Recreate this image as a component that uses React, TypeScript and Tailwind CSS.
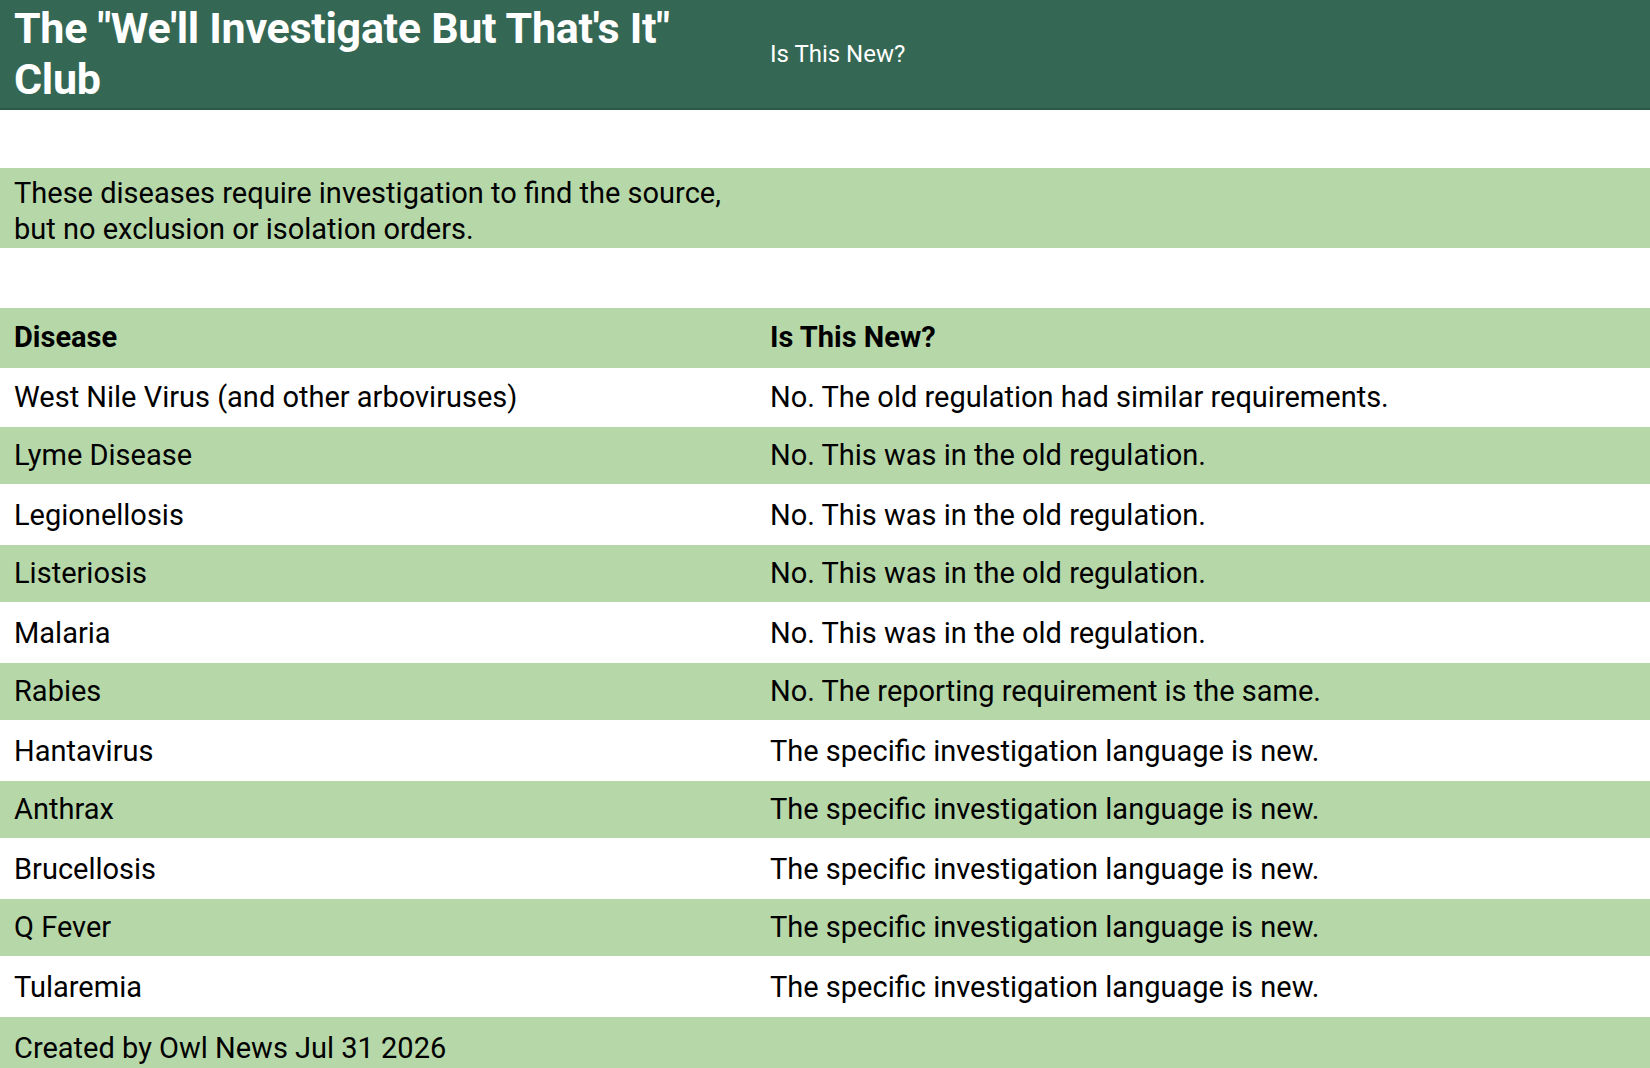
const rows: [string, string][] = [
  ['West Nile Virus (and other arboviruses)', 'No. The old regulation had similar requirements.'],
  ['Lyme Disease', 'No. This was in the old regulation.'],
  ['Legionellosis', 'No. This was in the old regulation.'],
  ['Listeriosis', 'No. This was in the old regulation.'],
  ['Malaria', 'No. This was in the old regulation.'],
  ['Rabies', 'No. The reporting requirement is the same.'],
  ['Hantavirus', 'The specific investigation language is new.'],
  ['Anthrax', 'The specific investigation language is new.'],
  ['Brucellosis', 'The specific investigation language is new.'],
  ['Q Fever', 'The specific investigation language is new.'],
  ['Tularemia', 'The specific investigation language is new.'],
]

export default function App() {
  return (
    <div className="w-[1650px] h-[1068px] overflow-hidden bg-white text-black" style={{ fontFamily: 'Roboto, "Liberation Sans", sans-serif' }}>
      <div className="flex h-[110px] bg-[#356854] border-b-2 border-[#2c5a48] text-white">
        <div className="w-[753px] px-[14px] pt-[3px] text-[43px] font-bold leading-[51px] tracking-[-0.3px]">
          The "We'll Investigate But That's It" Club
        </div>
        <div className="flex-1 px-[17px] pt-[36px] text-[24px]">Is This New?</div>
      </div>
      <div className="h-[58px]" />
      <div className="flex h-[82px] bg-[#b6d7a8] border-b-2 border-white">
        <div className="w-[753px] px-[14px] pt-[7px] text-[29px] leading-[36px]">
          These diseases require investigation to find the source, but no exclusion or isolation orders.
        </div>
      </div>
      <div className="h-[58px]" />
      <div className="flex h-[60px] items-center bg-[#b6d7a8] text-[29px] font-bold">
        <div className="w-[753px] px-[14px]">Disease</div>
        <div className="flex-1 px-[17px]">Is This New?</div>
      </div>
      {rows.map(([d, n], i) => (
        <div
          key={d}
          className={`flex h-[59px] items-center text-[29px] ${i % 2 === 1 ? 'bg-[#b6d7a8] border-b-2 border-white' : 'bg-white'}`}
        >
          <div className="w-[753px] px-[14px]">{d}</div>
          <div className="flex-1 px-[17px]">{n}</div>
        </div>
      ))}
      <div className="h-[60px] bg-[#b6d7a8] px-[14px] pt-[10px] text-[29px]">Created by Owl News Jul 31 2026</div>
    </div>
  )
}
